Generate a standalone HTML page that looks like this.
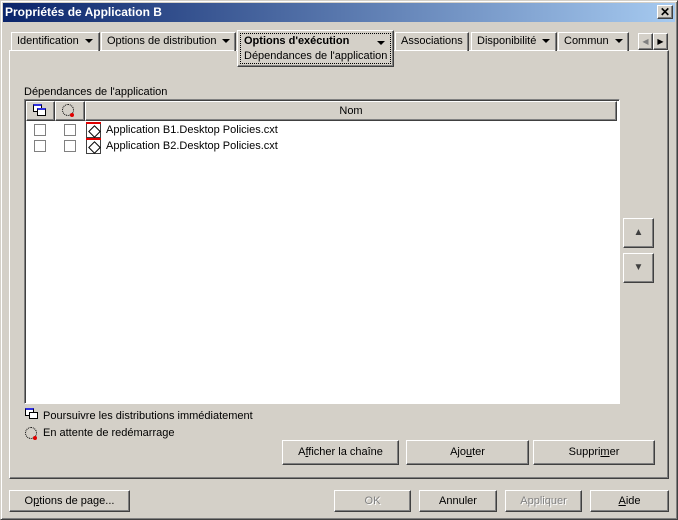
<!DOCTYPE html>
<html><head><meta charset="utf-8"><style>
*{box-sizing:border-box;margin:0;padding:0}
body{width:678px;height:520px;background:#d4d0c8;font-family:"Liberation Sans",Arial,sans-serif;font-size:11px;color:#000;position:relative;overflow:hidden}
.a{position:absolute}
.out{position:absolute;border:1px solid;border-color:#fff #404040 #404040 #fff;box-shadow:inset -1px -1px 0 #808080}
.btn{position:absolute;background:#d4d0c8;border:1px solid;border-color:#fff #404040 #404040 #fff;box-shadow:inset -1px -1px 0 #808080;text-align:center;line-height:21px}
.tab{position:absolute;top:32px;height:19px;border:1px solid;border-color:#fff #404040 transparent #fff;border-bottom:none;box-shadow:inset -1px 0 0 #808080;line-height:17px;padding-left:5px;white-space:nowrap}
.tri{display:inline-block;width:0;height:0;border-left:4px solid transparent;border-right:4px solid transparent;border-top:4px solid #000;vertical-align:middle;margin-left:6px}
.cb{position:absolute;width:12px;height:12px;background:#fff;border:1px solid #808080}
.ic{position:absolute;width:15px;height:16px;border:1px solid #404040;background:#fff}
.ic:before{content:"";position:absolute;left:-1px;top:-1px;width:15px;height:2px;background:#e00000}
.ic:after{content:"";position:absolute;left:3px;top:4px;width:7px;height:7px;border:1px solid #000;transform:rotate(45deg)}
.gr{color:#808080;text-shadow:1px 1px 0 #fff}
</style></head><body>
<div class="a" style="left:0;top:0;width:678px;height:520px;border:1px solid;border-color:#d4d0c8 #404040 #404040 #d4d0c8;box-shadow:inset 1px 1px 0 #fff,inset -1px -1px 0 #808080"></div>
<div class="a" style="left:3px;top:3px;width:672px;height:19px;background:linear-gradient(to right,#0a246a,#a6caf0)"></div>
<div class="a" style="left:5px;top:4px;color:#fff;font-weight:bold;font-size:12px;line-height:17px">Propriétés de Application B</div>
<div class="btn" style="left:657px;top:5px;width:16px;height:14px;line-height:12px;font-size:12px;font-weight:bold">✕</div>

<div class="out" style="left:9px;top:50px;width:660px;height:429px"></div>
<div class="tab" style="left:11px;width:89px">Identification<span class="tri"></span></div>
<div class="tab" style="left:101px;width:135px">Options de distribution<span class="tri"></span></div>
<div class="tab" style="left:395px;width:74px">Associations</div>
<div class="tab" style="left:471px;width:86px">Disponibilité<span class="tri"></span></div>
<div class="tab" style="left:558px;width:71px">Commun<span class="tri"></span></div>
<div class="a" style="left:237px;top:30px;width:157px;height:37px;background:#d4d0c8;border:1px solid;border-color:#fff #404040 #404040 #fff;box-shadow:inset -1px -1px 0 #808080"></div>
<div class="a" style="left:240px;top:33px;width:151px;height:31px;border:1px dotted #000"></div>
<div class="a" style="left:244px;top:35px;font-weight:bold">Options d'exécution</div>
<div class="a" style="left:377px;top:37px"><span class="tri" style="margin:0"></span></div>
<div class="a" style="left:244px;top:50px">Dépendances de l'application</div>
<div class="btn" style="left:638px;top:33px;width:15px;height:17px;line-height:15px;color:#808080;font-size:8px">◀</div>
<div class="btn" style="left:653px;top:33px;width:15px;height:17px;line-height:15px;font-size:8px">▶</div>

<div class="a" style="left:24px;top:86px">Dépendances de l'application</div>
<div class="a" style="left:24px;top:99px;width:596px;height:305px;background:#fff;border:1px solid;border-color:#808080 #fff #fff #808080;box-shadow:inset 1px 1px 0 #404040"></div>
<div class="out" style="left:26px;top:101px;width:29px;height:20px;background:#d4d0c8"></div>
<div class="out" style="left:55px;top:101px;width:30px;height:20px;background:#d4d0c8"></div>
<div class="out" style="left:85px;top:101px;width:532px;height:20px;background:#d4d0c8;text-align:center;line-height:18px">Nom</div>
<div class="a" style="left:33px;top:104px;width:9px;height:8px;border:1px solid #000;border-top:2px solid #3030e0;background:#fff"></div>
<div class="a" style="left:37px;top:108px;width:9px;height:8px;border:1px solid #000;border-top:2px solid #3030e0;background:#fff"></div>
<div class="a" style="left:62px;top:104px;width:12px;height:12px;border:1px dotted #000;border-radius:50%"></div>
<div class="a" style="left:70px;top:113px;width:4px;height:4px;background:#e00000;border-radius:50%"></div>
<div class="cb" style="left:34px;top:124px"></div><div class="cb" style="left:64px;top:124px"></div>
<div class="cb" style="left:34px;top:140px"></div><div class="cb" style="left:64px;top:140px"></div>
<div class="ic" style="left:86px;top:122px"></div><div class="ic" style="left:86px;top:138px"></div>
<div class="a" style="left:106px;top:124px">Application B1.Desktop Policies.cxt</div>
<div class="a" style="left:106px;top:140px">Application B2.Desktop Policies.cxt</div>

<div class="btn" style="left:623px;top:218px;width:31px;height:30px;line-height:28px;font-size:10px;color:#404040">▲</div>
<div class="btn" style="left:623px;top:253px;width:31px;height:30px;line-height:28px;font-size:10px;color:#404040">▼</div>

<div class="a" style="left:25px;top:408px;width:9px;height:8px;border:1px solid #000;border-top:2px solid #3030e0;background:#fff"></div>
<div class="a" style="left:29px;top:412px;width:9px;height:7px;border:1px solid #000;background:#fff"></div>
<div class="a" style="left:43px;top:410px">Poursuivre les distributions immédiatement</div>
<div class="a" style="left:25px;top:427px;width:12px;height:12px;border:1px dotted #000;border-radius:50%"></div>
<div class="a" style="left:33px;top:436px;width:4px;height:4px;background:#e00000;border-radius:50%"></div>
<div class="a" style="left:43px;top:427px">En attente de redémarrage</div>

<div class="btn" style="left:282px;top:440px;width:117px;height:25px;line-height:23px">A<u>f</u>ficher la chaîne</div>
<div class="btn" style="left:406px;top:440px;width:123px;height:25px;line-height:23px">Ajo<u>u</u>ter</div>
<div class="btn" style="left:533px;top:440px;width:122px;height:25px;line-height:23px">Suppri<u>m</u>er</div>

<div class="btn" style="left:9px;top:490px;width:121px;height:22px;line-height:20px">O<u>p</u>tions de page...</div>
<div class="btn gr" style="left:334px;top:490px;width:77px;height:22px;line-height:20px">OK</div>
<div class="btn" style="left:419px;top:490px;width:78px;height:22px;line-height:20px">Annuler</div>
<div class="btn gr" style="left:505px;top:490px;width:77px;height:22px;line-height:20px">Appliquer</div>
<div class="btn" style="left:590px;top:490px;width:79px;height:22px;line-height:20px"><u>A</u>ide</div>
</body></html>
